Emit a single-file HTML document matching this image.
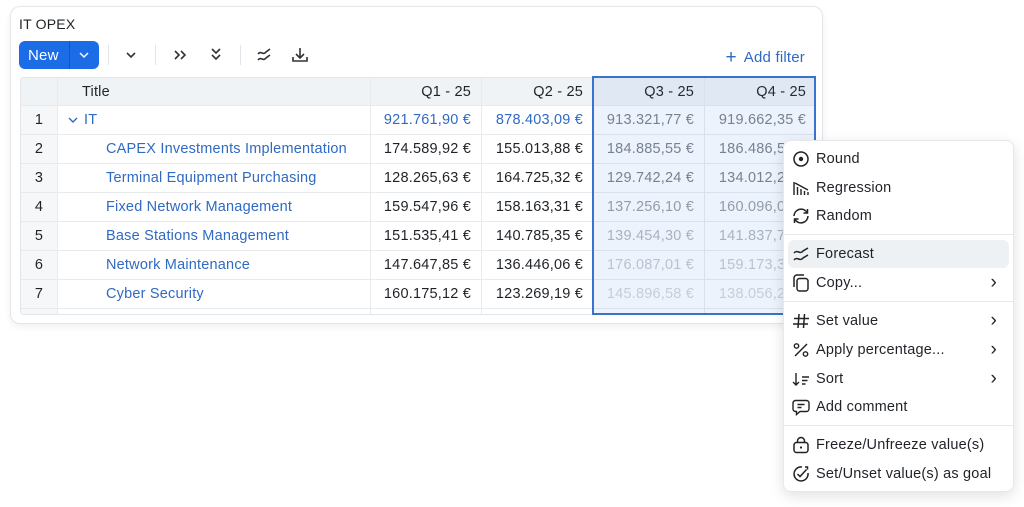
<!DOCTYPE html>
<html><head><style>
*{margin:0;padding:0;box-sizing:border-box}
body{width:1024px;height:507px;background:#fff;font-family:"Liberation Sans",sans-serif;font-size:14.5px;letter-spacing:0.2px;color:#1f2328;position:relative;overflow:hidden}
.a{position:absolute}
.card{left:10px;top:6px;width:813px;height:318px;border:1px solid #e3e6ea;border-radius:10px;box-shadow:0 3px 8px rgba(0,0,0,.06);background:#fff}
.tbl{left:20px;top:77px;width:795px;height:238px;border:1px solid #e2e6ea;border-radius:4px;overflow:hidden}
.row{position:absolute;left:0;width:795px;height:29px;border-bottom:1px solid #e8ebee;line-height:28px}
.c{position:absolute;top:0;height:100%;border-right:1px solid #e8ebee;white-space:nowrap}
.num{left:0;width:37px;text-align:center;background:#f5f7f9}
.tit{left:37px;width:313px;color:#2f6ac4}
.v{text-align:right;padding-right:10px}
.q1{left:350px;width:111px}.q2{left:461px;width:112px}.q3{left:573px;width:111px;color:#7d838b}.q4{left:684px;width:111px;color:#7d838b;border-right:none}
.hd{background:#f0f3f6}
.menu{left:783px;top:140px;width:231px;height:352px;background:#fff;border:1px solid #e6e8eb;border-radius:8px;box-shadow:0 4px 14px rgba(0,0,0,.12)}
.mi{position:absolute;left:0;width:229px;height:28px;line-height:28px;padding-left:32px;color:#1f2328}
.mi svg{position:absolute;left:8px;top:5px}
.mi .ch{position:absolute;right:16px;top:0;font-size:19px;font-weight:300}
.sep{position:absolute;left:0;width:229px;height:1px;background:#e6e8eb}
</style></head><body>
<div class="a card"></div>
<div class="a" style="left:19px;top:16px;font-size:14px">IT OPEX</div>
<div class="a" style="left:19px;top:41px;width:80px;height:28px;background:#1b6ce6;border-radius:6px;color:#fff;line-height:29px;padding-left:9px;font-size:15px">New</div>
<div class="a" style="left:69px;top:41px;width:1px;height:28px;background:#0f55c0"></div>
<svg class="a" style="left:78px;top:50px" width="12" height="10"><path d="M2 3l4 4 4-4" stroke="#fff" stroke-width="1.5" fill="none"/></svg>
<div class="a" style="left:108px;top:45px;width:1px;height:20px;background:#e1e4e8"></div>
<div class="a" style="left:155px;top:45px;width:1px;height:20px;background:#e1e4e8"></div>
<div class="a" style="left:240px;top:45px;width:1px;height:20px;background:#e1e4e8"></div>
<svg class="a" style="left:124px;top:49px" width="14" height="12"><path d="M3 4l4 4 4-4" stroke="#333" stroke-width="1.6" fill="none"/></svg>
<svg class="a" style="left:172px;top:48px" width="16" height="14"><path d="M3 3l4 4-4 4M9 3l4 4-4 4" stroke="#333" stroke-width="1.6" fill="none"/></svg>
<svg class="a" style="left:208px;top:46px" width="16" height="16"><path d="M4 3l4 4 4-4M4 9l4 4 4-4" stroke="#333" stroke-width="1.6" fill="none"/></svg>
<svg class="a" style="left:256px;top:47px" width="16" height="16"><path d="M2 7c3-4 5 2 8-2l4-3M2 13c3-4 5 2 8-2l4-3" stroke="#333" stroke-width="1.6" fill="none"/></svg>
<svg class="a" style="left:291px;top:46px" width="18" height="18"><path d="M9 2v10M5 8l4 4 4-4M2 11v4h14v-4" stroke="#333" stroke-width="1.6" fill="none"/></svg>
<div class="a" style="right:219px;top:46px;color:#2f6ac4;font-size:15px"><span style="font-size:19px;margin-right:7px;position:relative;top:1px">+</span>Add filter</div>
<div class="a tbl">
<div class="row hd" style="top:0;height:28px"><div class="c num" style="background:#f0f3f6"></div><div class="c tit" style="color:#1f2328;padding-left:24px">Title</div><div class="c v q1">Q1 - 25</div><div class="c v q2">Q2 - 25</div><div class="c v q3" style="color:#1f2328">Q3 - 25</div><div class="c v q4" style="color:#1f2328">Q4 - 25</div></div>
<div class="row" style="top:28px"><div class="c num">1</div><div class="c tit" style="padding-left:10px"><svg width="10" height="8" style="margin-right:6px"><path d="M1 2l4 4 4-4" stroke="#2f6ac4" stroke-width="1.4" fill="none"/></svg>IT</div><div class="c v q1" style="color:#2f6ac4">921.761,90 €</div><div class="c v q2" style="color:#2f6ac4">878.403,09 €</div><div class="c v q3">913.321,77 €</div><div class="c v q4">919.662,35 €</div></div>
<div class="row" style="top:57px"><div class="c num">2</div><div class="c tit" style="padding-left:48px">CAPEX Investments Implementation</div><div class="c v q1">174.589,92 €</div><div class="c v q2">155.013,88 €</div><div class="c v q3">184.885,55 €</div><div class="c v q4">186.486,55 €</div></div>
<div class="row" style="top:86px"><div class="c num">3</div><div class="c tit" style="padding-left:48px">Terminal Equipment Purchasing</div><div class="c v q1">128.265,63 €</div><div class="c v q2">164.725,32 €</div><div class="c v q3">129.742,24 €</div><div class="c v q4">134.012,24 €</div></div>
<div class="row" style="top:115px"><div class="c num">4</div><div class="c tit" style="padding-left:48px">Fixed Network Management</div><div class="c v q1">159.547,96 €</div><div class="c v q2">158.163,31 €</div><div class="c v q3" style="color:#9aa0a7">137.256,10 €</div><div class="c v q4" style="color:#9aa0a7">160.096,03 €</div></div>
<div class="row" style="top:144px"><div class="c num">5</div><div class="c tit" style="padding-left:48px">Base Stations Management</div><div class="c v q1">151.535,41 €</div><div class="c v q2">140.785,35 €</div><div class="c v q3" style="color:#b4b9bf">139.454,30 €</div><div class="c v q4" style="color:#b4b9bf">141.837,71 €</div></div>
<div class="row" style="top:173px"><div class="c num">6</div><div class="c tit" style="padding-left:48px">Network Maintenance</div><div class="c v q1">147.647,85 €</div><div class="c v q2">136.446,06 €</div><div class="c v q3" style="color:#c6cacf">176.087,01 €</div><div class="c v q4" style="color:#c6cacf">159.173,31 €</div></div>
<div class="row" style="top:202px"><div class="c num">7</div><div class="c tit" style="padding-left:48px">Cyber Security</div><div class="c v q1">160.175,12 €</div><div class="c v q2">123.269,19 €</div><div class="c v q3" style="color:#d3d6da">145.896,58 €</div><div class="c v q4" style="color:#d3d6da">138.056,21 €</div></div>
<div class="row" style="top:231px;border:none"><div class="c num"></div><div class="c tit"></div><div class="c q1"></div><div class="c q2"></div><div class="c q3"></div></div>
</div>
<div class="a" style="left:592px;top:76px;width:224px;height:239px;border:2px solid #3b73cc;background:rgba(60,120,220,.09)"></div>
<div class="a menu">
<div class="mi" style="top:4px"><svg width="18" height="18"><circle cx="9" cy="9" r="7" stroke="#222" stroke-width="1.5" fill="none"/><circle cx="9" cy="9" r="2.2" fill="#222"/></svg>Round</div>
<div class="mi" style="top:33px"><svg width="18" height="18"><path d="M2 3v13M5.5 8v8M9 10v6M12.5 12v4M16 13v3M3 4l13 7" stroke="#222" stroke-width="1.4" fill="none"/></svg>Regression</div>
<div class="mi" style="top:61px"><svg width="18" height="18"><path d="M2 9a7 7 0 0 1 13-3.5M16 9a7 7 0 0 1-13 3.5M15.5 2v4h-4M2.5 16v-4h4" stroke="#222" stroke-width="1.5" fill="none"/></svg>Random</div>
<div class="sep" style="top:93px"></div>
<div class="a" style="left:4px;top:99px;width:221px;height:28px;background:#eef1f4;border-radius:6px"></div>
<div class="mi" style="top:99px"><svg width="18" height="18"><path d="M2 8c3-4 6 2 9-2l5-3M2 15c3-4 6 2 9-2l5-3" stroke="#222" stroke-width="1.5" fill="none"/></svg>Forecast</div>
<div class="mi" style="top:128px"><svg width="18" height="18"><rect x="5" y="4.5" width="11" height="12.5" rx="2.5" stroke="#222" stroke-width="1.5" fill="none"/><path d="M2 13V4a3 3 0 0 1 3-3h7" stroke="#222" stroke-width="1.5" fill="none"/></svg>Copy...<span class="ch">›</span></div>
<div class="sep" style="top:160px"></div>
<div class="mi" style="top:166px"><svg width="18" height="18"><path d="M7 2L6 16M12.5 2l-1 14M2 6.5h15M1 12h15" stroke="#222" stroke-width="1.5" fill="none"/></svg>Set value<span class="ch">›</span></div>
<div class="mi" style="top:195px"><svg width="18" height="18"><circle cx="4.5" cy="5" r="2.2" stroke="#222" stroke-width="1.4" fill="none"/><circle cx="13.5" cy="13" r="2.2" stroke="#222" stroke-width="1.4" fill="none"/><path d="M15 3L3 15" stroke="#222" stroke-width="1.5"/></svg>Apply percentage...<span class="ch">›</span></div>
<div class="mi" style="top:224px"><svg width="18" height="18"><path d="M4 3v12M1 12l3 3 3-3M10 7h7M10 10.5h5.5M10 14h3.5" stroke="#222" stroke-width="1.4" fill="none"/></svg>Sort<span class="ch">›</span></div>
<div class="mi" style="top:252px"><svg width="18" height="18"><path d="M3.5 2.5h11a2.5 2.5 0 0 1 2.5 2.5v6a2.5 2.5 0 0 1-2.5 2.5H8l-3.5 3v-3h-1A2.5 2.5 0 0 1 1 11V5a2.5 2.5 0 0 1 2.5-2.5zM5.5 6.5h7M5.5 9.5h4" stroke="#222" stroke-width="1.4" fill="none"/></svg>Add comment</div>
<div class="sep" style="top:284px"></div>
<div class="mi" style="top:290px"><svg width="18" height="18"><rect x="2" y="6.5" width="14" height="10" rx="2.5" stroke="#222" stroke-width="1.5" fill="none"/><path d="M5.5 6.5V5a3.5 3.5 0 0 1 7 0v1.5" stroke="#222" stroke-width="1.5" fill="none"/><circle cx="9" cy="11.5" r="1.1" fill="#222"/></svg>Freeze/Unfreeze value(s)</div>
<div class="mi" style="top:319px"><svg width="18" height="18"><path d="M16 8a7 7 0 1 1-6-6" stroke="#222" stroke-width="1.5" fill="none"/><path d="M5.5 9l2.5 2.5 6.5-7M13 2h2.5v2.5" stroke="#222" stroke-width="1.5" fill="none"/></svg>Set/Unset value(s) as goal</div>
</div>
</body></html>
